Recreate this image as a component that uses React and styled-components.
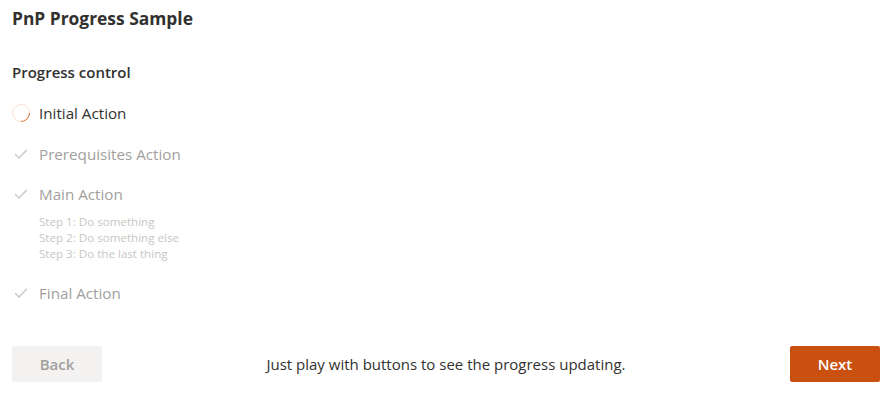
import React, { useState } from "react";
import styled, { createGlobalStyle } from "styled-components";

const GlobalStyle = createGlobalStyle`
  body {
    margin: 0;
    background: #ffffff;
    font-family: "Open Sans", "Noto Sans", sans-serif;
    color: #323130;
  }
`;

const Page = styled.div`
  padding: 6px 12px 0 12px;
  width: 868px;
`;

const Title = styled.h1`
  margin: 0;
  font-size: 17.4px;
  line-height: 24px;
  font-weight: 700;
  color: #323130;
`;

const Label = styled.div`
  margin-top: 32px;
  font-size: 15px;
  font-weight: 600;
  line-height: 20px;
  color: #323130;
`;

const StepList = styled.ul`
  list-style: none;
  margin: 21px 0 0 0;
  padding: 0;
  display: flex;
  flex-direction: column;
  gap: 20.5px;
`;

const Step = styled.li`
  display: flex;
  flex-direction: column;
`;

const StepHead = styled.div`
  display: flex;
  align-items: center;
  gap: 9px;
  height: 20px;
`;

const StepTitle = styled.span`
  font-size: 15.2px;
  line-height: 20px;
  color: ${({ $active }) => ($active ? "#323130" : "#a19f9d")};
`;

const SubList = styled.div`
  margin: 9.5px 0 0 27px;
  display: flex;
  flex-direction: column;
`;

const SubStep = styled.span`
  font-size: 11.6px;
  line-height: 16.4px;
  color: #c8c6c4;
`;

const Spinner = styled.div`
  width: 18px;
  height: 18px;
  box-sizing: border-box;
  border-radius: 50%;
  border: 1.5px solid #f8e0d1;
  border-right-color: #d06a30;
  transform: rotate(45deg);
`;

const IconBox = styled.span`
  width: 18px;
  height: 18px;
  display: inline-flex;
  align-items: center;
  justify-content: center;
`;

const Footer = styled.div`
  margin-top: 43px;
  display: flex;
  align-items: center;
  justify-content: space-between;
`;

const Button = styled.button`
  width: 90px;
  height: 36px;
  border: none;
  border-radius: 2px;
  font-family: "Open Sans", "Noto Sans", sans-serif;
  font-size: 15px;
  font-weight: 600;
  background: ${({ $primary, disabled }) =>
    disabled ? "#f3f2f1" : $primary ? "#ca5010" : "#f3f2f1"};
  color: ${({ $primary, disabled }) =>
    disabled ? "#a19f9d" : $primary ? "#ffffff" : "#323130"};
  cursor: ${({ disabled }) => (disabled ? "default" : "pointer")};
`;

const Hint = styled.span`
  font-size: 15px;
  color: #323130;
`;

const Check = () => (
  <IconBox>
    <svg width="14" height="14" viewBox="0 0 14 14" fill="none">
      <path
        d="M1.5 7.5 L5 11 L12.5 3.2"
        stroke="#c8c6c4"
        strokeWidth="1.3"
        strokeLinecap="round"
        strokeLinejoin="round"
      />
    </svg>
  </IconBox>
);

const steps = [
  { title: "Initial Action" },
  { title: "Prerequisites Action" },
  {
    title: "Main Action",
    subs: ["Step 1: Do something", "Step 2: Do something else", "Step 3: Do the last thing"],
  },
  { title: "Final Action" },
];

const App = () => {
  const [current, setCurrent] = useState(0);

  return (
    <Page>
      <GlobalStyle />
      <Title>PnP Progress Sample</Title>
      <Label>Progress control</Label>
      <StepList>
        {steps.map((s, i) => (
          <Step key={s.title}>
            <StepHead>
              {i === current ? (
                <IconBox>
                  <Spinner />
                </IconBox>
              ) : (
                <Check />
              )}
              <StepTitle $active={i === current}>{s.title}</StepTitle>
            </StepHead>
            {s.subs && (
              <SubList>
                {s.subs.map((t) => (
                  <SubStep key={t}>{t}</SubStep>
                ))}
              </SubList>
            )}
          </Step>
        ))}
      </StepList>
      <Footer>
        <Button disabled={current === 0} onClick={() => setCurrent(current - 1)}>
          Back
        </Button>
        <Hint>Just play with buttons to see the progress updating.</Hint>
        <Button
          $primary
          onClick={() => setCurrent(Math.min(current + 1, steps.length - 1))}
        >
          Next
        </Button>
      </Footer>
    </Page>
  );
};

export default App;
